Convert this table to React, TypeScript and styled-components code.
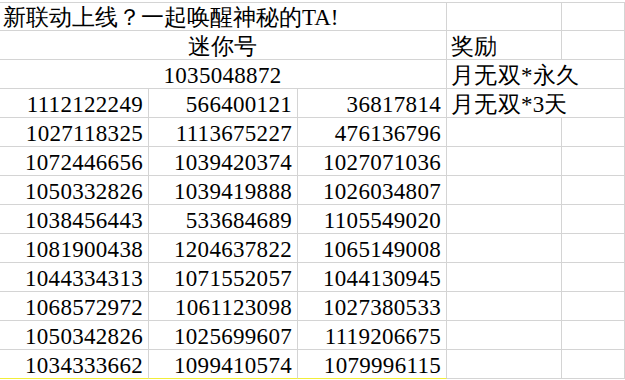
import { Fragment } from "react";
import styled, { createGlobalStyle } from "styled-components";

const Global = createGlobalStyle`
  html, body {
    margin: 0;
    padding: 0;
    background: #fff;
    color: #000;
    font-family: "Liberation Serif", serif;
  }
`;

const Sheet = styled.div`
  display: grid;
  grid-template-columns: 149px 149px 149px 115px 1fr;
  grid-auto-rows: 29px;
  width: 625px;
  height: 380px;
  padding-top: 2px;
  box-sizing: border-box;
  overflow: hidden;
  position: relative;

  &::before {
    content: "";
    position: absolute;
    top: 2px;
    left: 0;
    right: 0;
    height: 1px;
    background: #d4d4d4;
  }
`;

const Cell = styled.div<{
  $align?: "left" | "center" | "right";
  $span?: number;
  $mark?: boolean;
}>`
  font-family: "Liberation Serif", serif;
  font-size: 23px;
  letter-spacing: 0.3px;
  grid-column: span ${(p) => p.$span ?? 1};
  box-sizing: border-box;
  border-right: 1px solid #d4d4d4;
  border-bottom: 1px solid ${(p) => (p.$mark ? "#f2ee3a" : "#d4d4d4")};
  display: flex;
  align-items: center;
  justify-content: ${(p) =>
    p.$align === "right" ? "flex-end" : p.$align === "center" ? "center" : "flex-start"};
  padding: 2px 5px 0 4px;
  line-height: 1;
  white-space: nowrap;
`;

const Title = styled(Cell)`
  padding-left: 3px;
  letter-spacing: 0;
`;

const rows: [string, string, string][] = [
  ["1112122249", "566400121", "36817814"],
  ["1027118325", "1113675227", "476136796"],
  ["1072446656", "1039420374", "1027071036"],
  ["1050332826", "1039419888", "1026034807"],
  ["1038456443", "533684689", "1105549020"],
  ["1081900438", "1204637822", "1065149008"],
  ["1044334313", "1071552057", "1044130945"],
  ["1068572972", "1061123098", "1027380533"],
  ["1050342826", "1025699607", "1119206675"],
  ["1034333662", "1099410574", "1079996115"],
];

export default function App() {
  return (
    <>
      <Global />
      <Sheet>
        <Title $span={3}>新联动上线？一起唤醒神秘的TA!</Title>
        <Cell />
        <Cell />

        <Cell $span={3} $align="center">迷你号</Cell>
        <Cell>奖励</Cell>
        <Cell />

        <Cell $span={3} $align="center">1035048872</Cell>
        <Cell $span={2}>月无双*永久</Cell>

        {rows.map((r, i) => {
          const last = i === rows.length - 1;
          return (
            <Fragment key={i}>
              <Cell $align="right" $mark={last}>{r[0]}</Cell>
              <Cell $align="right" $mark={last}>{r[1]}</Cell>
              <Cell $align="right" $mark={last}>{r[2]}</Cell>
              {i === 0 ? (
                <Cell $span={2}>月无双*3天</Cell>
              ) : (
                <>
                  <Cell />
                  <Cell />
                </>
              )}
            </Fragment>
          );
        })}
      </Sheet>
    </>
  );
}
